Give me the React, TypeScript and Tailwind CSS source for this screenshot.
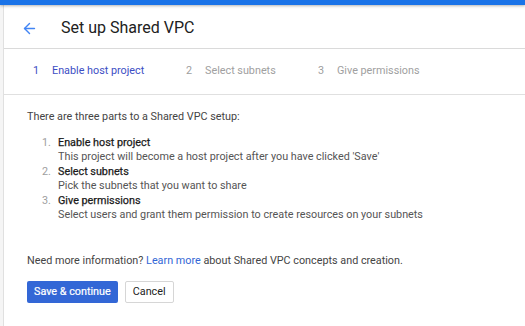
import { ArrowLeft } from 'lucide-react';

const steps = [
  { n: 1, label: 'Enable host project', active: true },
  { n: 2, label: 'Select subnets', active: false },
  { n: 3, label: 'Give permissions', active: false },
];

const parts = [
  { title: 'Enable host project', desc: "This project will become a host project after you have clicked 'Save'" },
  { title: 'Select subnets', desc: 'Pick the subnets that you want to share' },
  { title: 'Give permissions', desc: 'Select users and grant them permission to create resources on your subnets' },
];

export default function App() {
  return (
    <div className="w-[525px] h-[326px] overflow-hidden bg-white flex flex-col" style={{ fontFamily: 'Roboto, "Liberation Sans", sans-serif' }}>
      {/* Top bar */}
      <div className="h-[5px] bg-[#1a73e8] shadow-[0_1px_3px_rgba(0,0,0,0.3)] shrink-0 relative z-10" />

      <div className="flex flex-1">
        <div className="w-[4px] bg-[#f5f5f5] border-r border-[#e0e0e0] shrink-0" />

        <div className="flex-1 flex flex-col">
          {/* Header */}
          <div className="h-[44px] pt-[3px] flex items-center border-b border-[#dadada]">
            <ArrowLeft className="ml-[17px] w-[17px] h-[17px] text-[#4285f4]" strokeWidth={2} />
            <h1 className="ml-[23px] text-[16px] text-[#212121]">Set up Shared VPC</h1>
          </div>

          {/* Steps */}
          <div className="h-[46px] flex items-center pl-[29px] border-b border-[#e0e0e0] text-[10.8px]">
            {steps.map(s => (
              <div key={s.n} className={`flex items-center ${s.n === 1 ? 'w-[153px]' : 'w-[132px]'}`}>
                <span className={`w-[19px] ${s.active ? 'text-[#3c4ec4]' : 'text-[#9e9e9e]'}`}>{s.n}</span>
                <span className={s.active ? 'text-[#3c4ec4]' : 'text-[#a0a0a0]'}>{s.label}</span>
              </div>
            ))}
          </div>

          {/* Body */}
          <div className="pl-[23px] pt-[15px] text-[10.8px] text-[#444] leading-[14.5px]">
            <p>There are three parts to a Shared VPC setup:</p>
            <ol className="mt-[11px] pl-[15px]">
              {parts.map((p, i) => (
                <li key={p.title} className="flex">
                  <span className="w-[16px] text-[#9e9e9e]">{i + 1}.</span>
                  <div>
                    <div className="text-[#1a1a1a] [-webkit-text-stroke:0.25px_#1a1a1a]">{p.title}</div>
                    <div className="text-[#555]">{p.desc}</div>
                  </div>
                </li>
              ))}
            </ol>

            <p className="mt-[31px]">
              Need more information? <span className="text-[#3367d6]">Learn more</span> about Shared VPC concepts and creation.
            </p>

            <div className="mt-[13px] flex gap-[7px]">
              <button className="h-[22px] px-[7px] bg-[#3367d6] text-white rounded-[2px] text-[10.8px] [-webkit-text-stroke:0.2px_#fff]">Save &amp; continue</button>
              <button className="h-[22px] px-[7px] bg-white text-[#212121] border border-[#d6d6d6] rounded-[2px] text-[10.8px]">Cancel</button>
            </div>
          </div>
        </div>
      </div>
    </div>
  );
}
